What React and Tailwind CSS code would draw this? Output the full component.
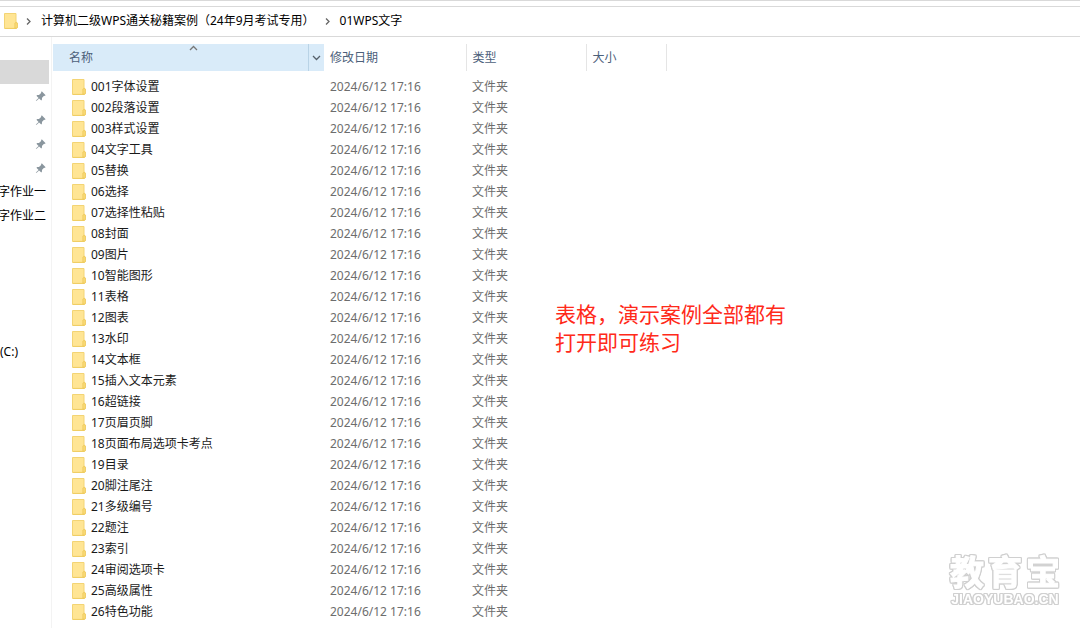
import React from "react";
import { BsPinAngleFill } from "react-icons/bs";

const folders = [
  "001字体设置", "002段落设置", "003样式设置", "04文字工具", "05替换", "06选择",
  "07选择性粘贴", "08封面", "09图片", "10智能图形", "11表格", "12图表", "13水印",
  "14文本框", "15插入文本元素", "16超链接", "17页眉页脚", "18页面布局选项卡考点",
  "19目录", "20脚注尾注", "21多级编号", "22题注", "23索引", "24审阅选项卡",
  "25高级属性", "26特色功能",
];

function FolderIcon() {
  return (
    <svg width="14" height="16" viewBox="0 0 14 16" className="shrink-0" aria-hidden="true">
      <path d="M.5.5h11.5v8.5l1.2.8v5.2l-1 .5H.5z" fill="#ffe594" stroke="#f3d474" />
      <path d="M1 15.4h11" stroke="#efcb60" strokeWidth=".8" />
      <path d="M10.9 15V10l1.1-.6 1.3.8V14.6l-1 .6z" fill="#fbdc7a" stroke="#ecc658" strokeWidth=".8" />
    </svg>
  );
}

function Chevron({ d, className }) {
  return (
    <svg width="9" height="9" viewBox="0 0 9 9" fill="none" stroke="currentColor" className={className} aria-hidden="true">
      <path d={d} strokeWidth="1.3" />
    </svg>
  );
}

function AddressBar() {
  return (
    <nav aria-label="路径" className="flex h-[31px] items-center border-y border-[#d9d9d9] pb-px pl-1 text-black">
      <FolderIcon />
      <Chevron d="M3 1.5l3 3-3 3" className="ml-1.5 text-[#666]" />
      <a href="#parent" className="ml-2 whitespace-nowrap">计算机二级WPS通关秘籍案例（24年9月考试专用）</a>
      <Chevron d="M3 1.5l3 3-3 3" className="ml-2 text-[#666]" />
      <a href="#current" className="ml-2 whitespace-nowrap">01WPS文字</a>
    </nav>
  );
}

function Sidebar() {
  return (
    <aside className="w-[52px] shrink-0 overflow-hidden border-r border-[#f3f3f3] pt-[23px] text-black">
      <div className="mr-0.5 h-6 bg-[#d9d9d9]" />
      <ul>
        {[1, 2, 3, 4].map((n) => (
          <li key={n} className="flex h-6 items-center justify-end pr-[5px]">
            <BsPinAngleFill className="size-[11px] text-[#8a969e]" aria-hidden="true" />
          </li>
        ))}
        {["字作业一", "字作业二"].map((t) => (
          <li key={t} className="flex h-6 items-center justify-end pr-[5px]">
            <a href="#work" className="whitespace-nowrap">{t}</a>
          </li>
        ))}
      </ul>
      <a href="#drive" className="mt-28 flex h-6 items-center">(C:)</a>
    </aside>
  );
}

function FileTable() {
  return (
    <table className="w-[613px] table-fixed border-collapse text-left">
      <colgroup>
        <col className="w-[271px]" />
        <col className="w-[142px]" />
        <col className="w-[120px]" />
        <col className="w-20" />
      </colgroup>
      <thead className="text-[#4c607a]">
        <tr className="h-[27px]">
          <th scope="col" className="relative bg-[#d9ebf9] p-0 font-normal">
            <div className="flex h-[27px] items-center justify-between pl-4">
              <span>名称</span>
              <button type="button" aria-label="筛选名称" className="flex h-full w-4 items-center justify-center border-l border-[#b9d3e6] text-[#55606a]">
                <Chevron d="M1 3l3.5 3.5L8 3" />
              </button>
            </div>
            <Chevron d="M1 6l3.5-3.5L8 6" className="absolute left-1/2 top-0 text-[#777]" />
          </th>
          <th scope="col" className="border-r border-[#e5e5e5] p-0 pl-1.5 font-normal">修改日期</th>
          <th scope="col" className="border-r border-[#e5e5e5] p-0 pl-1.5 font-normal">类型</th>
          <th scope="col" className="border-r border-[#e5e5e5] p-0 pl-1.5 font-normal">大小</th>
        </tr>
      </thead>
      <tbody className="text-[#6d6d6d]">
        <tr aria-hidden="true" className="h-[5px]" />
        {folders.map((name) => (
          <tr key={name} className="h-[21px]">
            <td className="p-0 pl-[19px]">
              <a href="#folder" className="flex items-center gap-[5px] text-[#1a1a1a]">
                <FolderIcon />
                <span className="leading-5">{name}</span>
              </a>
            </td>
            <td className="p-0 pl-1.5">2024/6/12 17:16</td>
            <td className="p-0 pl-1.5">文件夹</td>
            <td className="p-0" />
          </tr>
        ))}
      </tbody>
    </table>
  );
}

function Watermark() {
  return (
    <div className="absolute bottom-5 right-5 flex flex-col items-center font-bold text-white [filter:drop-shadow(1px_0_0_#d0d0d0)_drop-shadow(-1px_0_0_#d0d0d0)_drop-shadow(0_1px_0_#d0d0d0)_drop-shadow(0_-1px_0_#d0d0d0)]">
      <div className="flex gap-1 text-[34px] leading-9 [-webkit-text-stroke:1px_white]">
        <span>教</span>
        <span>育</span>
        <span>宝</span>
      </div>
      <div className="font-['Liberation_Sans',sans-serif] text-[14px] leading-[18px]">JIAOYUBAO.CN</div>
    </div>
  );
}

export default function App() {
  return (
    <div className="relative flex min-h-screen flex-col overflow-hidden border-t border-[#d9d9d9] bg-white pt-[5px] font-['Noto_Sans','Noto_Sans_CJK_SC',sans-serif] text-xs leading-4">
      <AddressBar />
      <main className="flex grow">
        <Sidebar />
        <div className="grow pl-px pt-[7px]">
          <FileTable />
        </div>
      </main>
      <p className="absolute left-[555px] top-[299px] text-[21px] leading-7 text-[#ff2a1a]">
        表格，演示案例全部都有<br />打开即可练习
      </p>
      <Watermark />
    </div>
  );
}
